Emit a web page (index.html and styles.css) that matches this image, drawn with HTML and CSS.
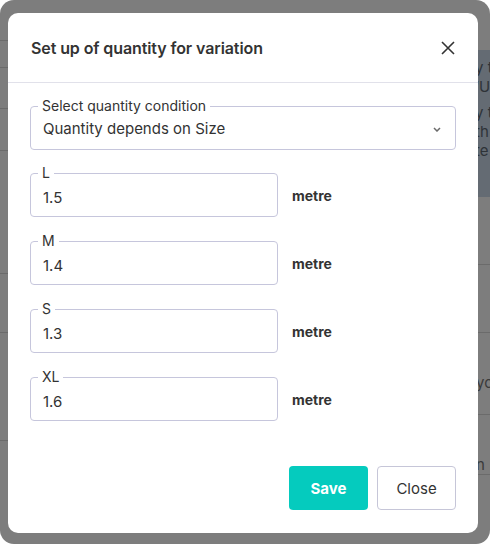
FILE: index.html
```html
<!DOCTYPE html>
<html>
    <head>
        <meta charset="utf-8">
        <title>Set up of quantity for variation</title>
        <link rel="stylesheet" href="styles.css">
    </head>
    <body>
        <div class="backdrop">
            <!-- the page sitting behind the dialog -->
            <div class="page">
                <div class="pageLeft">
                    <div class="row" style="height: 41px"></div>
                    <div class="row" style="height: 27px"></div>
                    <div class="row" style="height: 41px"></div>
                    <div class="row" style="height: 42px"></div>
                    <div class="row" style="height: 123px"></div>
                    <div class="row" style="height: 59px"></div>
                    <div class="row" style="height: 108px"></div>
                </div>
                <div class="pageRight">
                    <div class="notice">
                        <p>y t<br>&lsquo;U</p>
                        <p>y t<br>th<br>te</p>
                    </div>
                    <div class="row" style="height: 68px"></div>
                    <div class="row" style="height: 68px"></div>
                    <div class="row rowText" style="height: 82px">ycı</div>
                    <div class="row rowText">n</div>
                </div>
            </div>

            <div class="modal">
                <div class="modalHeader">
                    <h2>Set up of quantity for variation</h2>
                    <button class="closeIcon" aria-label="Close">
                        <svg width="16" height="16" viewBox="0 0 16 16">
                            <path d="M2 2 L14 14 M14 2 L2 14" stroke="#333" stroke-width="1.6" fill="none"/>
                        </svg>
                    </button>
                </div>
                <div class="modalBody">
                    <div class="field wide">
                        <span class="fieldLabel">Select quantity condition</span>
                        <div class="fieldValue selectValue">
                            Quantity depends on Size
                            <svg width="8" height="5" viewBox="0 0 8 5">
                                <path d="M1 1 L4 4 L7 1" stroke="#6a6a6a" stroke-width="1.5" fill="none"/>
                            </svg>
                        </div>
                    </div>
                    <div class="sizeRow">
                        <div class="field">
                            <span class="fieldLabel">L</span>
                            <div class="fieldValue">1.5</div>
                        </div>
                        <span class="unit">metre</span>
                    </div>
                    <div class="sizeRow">
                        <div class="field">
                            <span class="fieldLabel">M</span>
                            <div class="fieldValue">1.4</div>
                        </div>
                        <span class="unit">metre</span>
                    </div>
                    <div class="sizeRow">
                        <div class="field">
                            <span class="fieldLabel">S</span>
                            <div class="fieldValue">1.3</div>
                        </div>
                        <span class="unit">metre</span>
                    </div>
                    <div class="sizeRow">
                        <div class="field">
                            <span class="fieldLabel">XL</span>
                            <div class="fieldValue">1.6</div>
                        </div>
                        <span class="unit">metre</span>
                    </div>
                </div>
                <div class="modalFooter">
                    <button class="saveBtn">Save</button>
                    <button class="closeBtn">Close</button>
                </div>
            </div>
        </div>
    </body>
</html>
```

FILE: styles.css
```css
body {
    margin: 0;
    background: #fff;
    font-family: "Inter", "Open Sans", sans-serif;
    color: #333;
}
.backdrop {
    position: relative;
    width: 490px;
    height: 544px;
    border-radius: 14px;
    background: #7d7d7d;
    overflow: hidden;
}
.page {
    display: flex;
    justify-content: space-between;
    height: 100%;
}
.pageLeft {
    width: 8px;
}
.pageRight {
    width: 12px;
    padding-top: 50px;
    overflow: hidden;
}
.row {
    border-bottom: 1px solid #6b6b6b;
    box-sizing: border-box;
}
.rowText {
    color: #3a3a3a;
    font-size: 15px;
    padding-top: 40px;
    margin-left: -2px;
    white-space: nowrap;
}
.notice {
    height: 147px;
    background: #646b73;
    color: #2e3338;
    font-size: 15px;
    line-height: 19px;
    padding-top: 8px;
    box-sizing: border-box;
    margin-left: -3px;
    white-space: nowrap;
}
.notice p {
    margin: 0 0 7px 0;
}

.modal {
    position: absolute;
    left: 8px;
    top: 13px;
    width: 470px;
    height: 520px;
    background: #fff;
    border-radius: 10px;
    display: flex;
    flex-direction: column;
}
.modalHeader {
    display: flex;
    align-items: center;
    justify-content: space-between;
    height: 69px;
    padding: 0 22px 0 23px;
    border-bottom: 1px solid #e1e1ea;
}
.modalHeader h2 {
    margin: 0;
    font-size: 16px;
    font-weight: 600;
    color: #333;
    letter-spacing: -0.1px;
}
.closeIcon {
    border: none;
    background: none;
    padding: 0;
    width: 16px;
    height: 16px;
    cursor: pointer;
}
.modalBody {
    flex: 1;
    padding: 23px 22px 0 22px;
    display: flex;
    flex-direction: column;
    gap: 23px;
}
.field {
    position: relative;
    box-sizing: border-box;
    width: 248px;
    height: 44px;
    border: 1px solid #c6c6dc;
    border-radius: 4px;
}
.field.wide {
    width: 100%;
}
.fieldLabel {
    position: absolute;
    left: 7px;
    top: -9px;
    padding: 0 4px;
    background: #fff;
    font-size: 14px;
    line-height: 16px;
    color: #333;
}
.fieldValue {
    padding: 15px 12px 0 12px;
    font-size: 15px;
    line-height: 18px;
    color: #333;
}
.selectValue {
    display: flex;
    justify-content: space-between;
    align-items: center;
    padding-top: 13px;
    padding-right: 14px;
}
.sizeRow {
    display: flex;
    align-items: center;
    gap: 14px;
    margin-bottom: 1px;
}
.unit {
    font-size: 14px;
    font-weight: 700;
    color: #333;
}
.modalFooter {
    display: flex;
    justify-content: flex-end;
    gap: 9px;
    padding: 0 22px 23px 22px;
}
.modalFooter button {
    width: 79px;
    height: 44px;
    border-radius: 4px;
    font-family: "Inter", "Open Sans", sans-serif;
    font-size: 15px;
    cursor: pointer;
}
.saveBtn {
    background: #05cbbe;
    border: none;
    color: #fff;
    font-weight: 700;
}
.closeBtn {
    background: #fff;
    border: 1px solid #c6c6d8;
    color: #333;
}
```
